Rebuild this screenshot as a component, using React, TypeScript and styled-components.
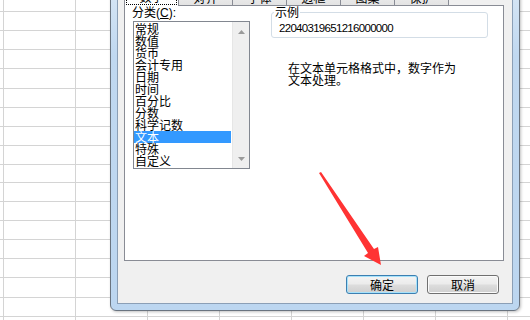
import React from "react";
import styled, { createGlobalStyle } from "styled-components";

const GlobalStyle = createGlobalStyle`
  *, *::before, *::after { box-sizing: border-box; }
  html, body { margin: 0; padding: 0; background: #fff; }
  body {
    font-family: "Noto Sans CJK SC", "Liberation Sans", sans-serif;
    font-size: 12px;
    color: #000;
  }
`;

const Sheet = styled.div`
  position: relative;
  width: 530px;
  height: 320px;
  overflow: hidden;
  background: #fff;
`;

const Grid = styled.div`
  display: grid;
  grid-template-columns: 4px repeat(8, 72px);
  grid-template-rows: 12px 19px 19px 19px 20px 19px 19px 19px 19px 18px 19px 19px 19px 19px 19px 20px 19px 19px;
`;

const Cell = styled.div`
  border-right: 1px solid #d4d4d4;
  border-bottom: 1px solid #d4d4d4;
`;

const Dialog = styled.div`
  position: absolute;
  left: 110px;
  top: -30px;
  width: 410px;
  height: 341px;
  padding: 6px;
  border: 1px solid #6a7480;
  border-radius: 0 0 6px 6px;
  background: linear-gradient(to bottom, #dce9f6 0%, #c0d8f0 25%, #bcd6f0 100%);
  box-shadow: 1px 1px 3px rgba(0, 0, 0, 0.25);
`;

const Body = styled.div`
  height: 100%;
  display: flex;
  flex-direction: column;
  padding: 7px 8px 0 6px;
  border: 1px solid #8b9fb6;
  background: #f0f0f0;
`;

const TabStrip = styled.div`
  display: flex;
  align-items: flex-end;
  height: 20px;
`;

const Tab = styled.div<{ $active?: boolean }>`
  position: relative;
  width: 55px;
  height: ${(p) => (p.$active ? 21 : 18)}px;
  margin-left: -1px;
  margin-bottom: ${(p) => (p.$active ? -1 : 0)}px;
  padding-top: ${(p) => (p.$active ? 3 : 4)}px;
  border: 1px solid #898c95;
  border-bottom: none;
  background: ${(p) =>
    p.$active ? "#fff" : "linear-gradient(to bottom, #f3f3f3, #e3e3e3)"};
  z-index: ${(p) => (p.$active ? 1 : 0)};
  text-align: center;
  line-height: 12px;

  &:first-child {
    margin-left: 0;
  }
`;

const FocusLabel = styled.span`
  display: inline-block;
  padding: 1px 12px;
  border: 1px dotted #000;
  line-height: 12px;
`;

const Panel = styled.div`
  height: 256px;
  display: flex;
  padding-left: 8px;
  border: 1px solid #898c95;
  background: #fff;
`;

const LeftColumn = styled.div`
  width: 117px;
  display: flex;
  flex-direction: column;
`;

const FieldLabel = styled.div`
  height: 15px;
  line-height: 15px;
  margin-left: -1px;
  font-family: "Liberation Sans", "Noto Sans CJK SC", sans-serif;
`;

const ListBox = styled.div`
  height: 148px;
  display: flex;
  border: 1px solid #828790;
  background: #fff;
`;

const Items = styled.div`
  flex: 1;
  padding-top: 1px;
`;

const Item = styled.div<{ $selected?: boolean }>`
  height: 12px;
  line-height: 12px;
  padding-left: 1px;
  margin-right: 1px;
  white-space: nowrap;
  background: ${(p) => (p.$selected ? "#3399ff" : "transparent")};
  color: ${(p) => (p.$selected ? "#fff" : "#000")};
`;

const ScrollBar = styled.div`
  width: 17px;
  display: flex;
  flex-direction: column;
  justify-content: space-between;
  padding: 8px 0 6px;
  border-left: 1px solid #e6e6e6;
  background: #efefef;
`;

const ScrollArrow = styled.div`
  display: flex;
  justify-content: center;
  height: 5px;
`;

const RightColumn = styled.div`
  width: 217px;
  margin-left: 21px;
  display: flex;
  flex-direction: column;
`;

const SampleBox = styled.fieldset`
  min-width: 0;
  margin: 0;
  padding: 3px 7px 2px;
  border: 1px solid #d3dde6;
  border-radius: 3px;
`;

const SampleLegend = styled.legend`
  margin-left: -5px;
  padding: 0 1px;
  line-height: 12px;
  font-size: 12px;
`;

const SampleValue = styled.div`
  line-height: 14px;
  font-family: "Liberation Sans", sans-serif;
  font-size: 11.5px;
  letter-spacing: -0.7px;
`;

const Description = styled.p`
  margin: 24px 0 0;
  padding-left: 17px;
  line-height: 12px;
`;

const Footer = styled.div`
  display: flex;
  justify-content: flex-end;
  gap: 9px;
  padding: 14px 5px 0 0;
`;

const Button = styled.button<{ $default?: boolean }>`
  width: 72px;
  height: 19px;
  padding: 0;
  border: 1px solid ${(p) => (p.$default ? "#3c7fb1" : "#707070")};
  border-radius: 3px;
  background: linear-gradient(
    to bottom,
    #f4f4f4 0%,
    #ebebeb 48%,
    #dddddd 52%,
    #cfcfcf 100%
  );
  box-shadow: ${(p) =>
    p.$default ? "inset 0 0 0 1px #a6e2fb" : "inset 0 0 0 1px #fbfbfb"};
  font-family: "Noto Sans CJK SC", sans-serif;
  font-size: 12px;
  line-height: 12px;
  color: #000;
`;

const Overlay = styled.svg`
  position: absolute;
  left: 0;
  top: 0;
  pointer-events: none;
`;

const tabs = ["数字", "对齐", "字体", "边框", "图案", "保护"];
const categories = [
  "常规",
  "数值",
  "货币",
  "会计专用",
  "日期",
  "时间",
  "百分比",
  "分数",
  "科学记数",
  "文本",
  "特殊",
  "自定义",
];

export default function App() {
  return (
    <Sheet>
      <GlobalStyle />
      <Grid>
        {Array.from({ length: 9 * 18 }).map((_, i) => (
          <Cell key={i} />
        ))}
      </Grid>

      <Dialog>
        <Body>
          <TabStrip>
            {tabs.map((t, i) => (
              <Tab key={t} $active={i === 0}>
                {i === 0 ? <FocusLabel>{t}</FocusLabel> : t}
              </Tab>
            ))}
          </TabStrip>
          <Panel>
            <LeftColumn>
              <FieldLabel>
                分类(<u>C</u>):
              </FieldLabel>
              <ListBox>
                <Items>
                  {categories.map((c) => (
                    <Item key={c} $selected={c === "文本"}>
                      {c}
                    </Item>
                  ))}
                </Items>
                <ScrollBar>
                  <ScrollArrow>
                    <svg width="7" height="4" viewBox="0 0 7 4">
                      <path d="M0 4 L3.5 0 L7 4 Z" fill="#9a9a9a" />
                    </svg>
                  </ScrollArrow>
                  <ScrollArrow>
                    <svg width="7" height="4" viewBox="0 0 7 4">
                      <path d="M0 0 L3.5 4 L7 0 Z" fill="#9a9a9a" />
                    </svg>
                  </ScrollArrow>
                </ScrollBar>
              </ListBox>
            </LeftColumn>
            <RightColumn>
              <SampleBox>
                <SampleLegend>示例</SampleLegend>
                <SampleValue>22040319651216000000</SampleValue>
              </SampleBox>
              <Description>
                在文本单元格格式中，数字作为
                <br />
                文本处理。
              </Description>
            </RightColumn>
          </Panel>
          <Footer>
            <Button $default>确定</Button>
            <Button>取消</Button>
          </Footer>
        </Body>
      </Dialog>

      <Overlay width="530" height="320" viewBox="0 0 530 320">
        <polygon
          points="319,173 368,253 364,256 381,265 378,247 374,249 321,172"
          fill="#ff3333"
        />
      </Overlay>
    </Sheet>
  );
}
